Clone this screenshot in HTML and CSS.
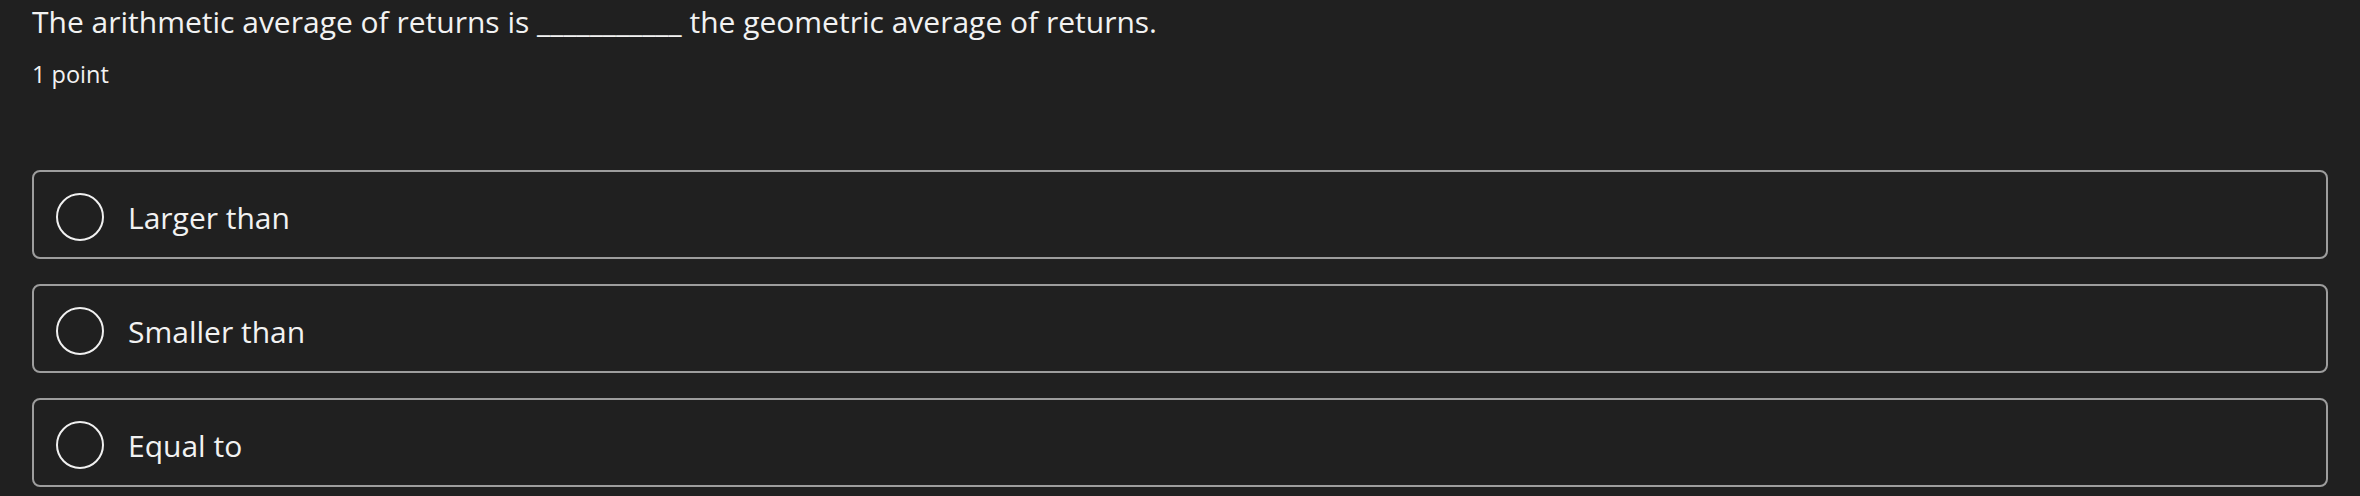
FILE: index.html
```html
<!DOCTYPE html>
<html>
<head>
<meta charset="utf-8">
<link rel="stylesheet" href="styles.css">
</head>
<body>
<div class="question">
  <div class="title">The arithmetic average of returns is ___________ the geometric average of returns.</div>
  <div class="points">1 point</div>
  <div class="options">
    <label class="option"><span class="radio"></span><span class="label">Larger than</span></label>
    <label class="option"><span class="radio"></span><span class="label">Smaller than</span></label>
    <label class="option"><span class="radio"></span><span class="label">Equal to</span></label>
  </div>
</div>
</body>
</html>
```
FILE: styles.css
```css
html, body {
  margin: 0;
  padding: 0;
  background: #202020;
}
body {
  font-family: "Open Sans", "Noto Sans", sans-serif;
  color: #f2f2f2;
}
.question {
  padding: 1px 32px 0 32px;
}
.title {
  font-size: 30px;
  line-height: 41px;
}
.points {
  margin-top: 17px;
  font-size: 23.5px;
  line-height: 31px;
}
.options {
  margin-top: 80px;
  display: flex;
  flex-direction: column;
  gap: 25px;
}
.option {
  box-sizing: border-box;
  height: 89px;
  border: 2px solid #9d9d9d;
  border-radius: 8px;
  display: flex;
  align-items: center;
  padding: 5px 0 0 22px;
}
.radio {
  box-sizing: border-box;
  width: 48px;
  height: 48px;
  border: 2px solid #f0f0f0;
  border-radius: 50%;
  flex: none;
}
.label {
  margin-left: 24px;
  font-size: 30px;
  line-height: 41px;
}
```
